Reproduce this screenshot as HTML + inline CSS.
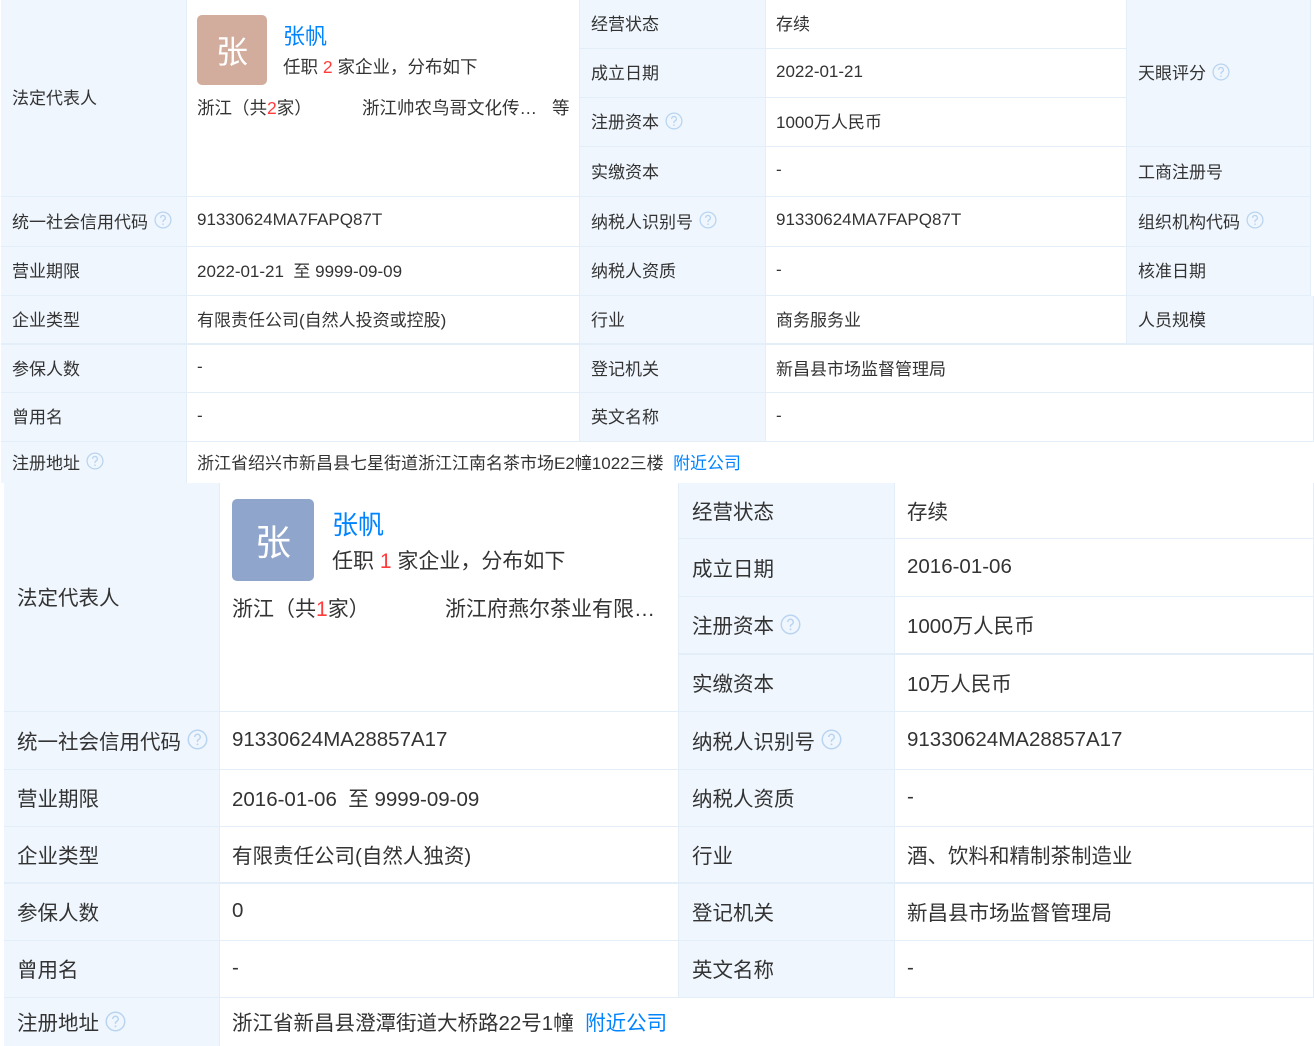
<!DOCTYPE html>
<html><head><meta charset="utf-8">
<style>
*{margin:0;padding:0;box-sizing:border-box}
body{width:1314px;height:1046px;background:#fff;position:relative;overflow:hidden;font-family:"Liberation Sans","Noto Sans CJK SC",sans-serif;color:#333}
.c{position:absolute;border-right:1px solid #e4eef8;border-bottom:1px solid #e4eef8;display:flex;align-items:center;white-space:nowrap}
.l{background:#eff6fd}
.t .c{font-size:17px;padding-bottom:3px}
.t .l{padding-left:11px}
.t .v{padding-left:10px}
.b .c{font-size:20.5px;padding-bottom:2px}
.b .l{padding-left:13px}
.b .v{padding-left:12px}
.q{display:inline-block;vertical-align:middle;margin-left:6px}
.blue{color:#0084ff}
.red{color:#ff3b3b}
.abs{position:absolute;white-space:nowrap}
</style></head><body>
<svg width="0" height="0" style="position:absolute"><defs><symbol id="q" viewBox="0 0 20 20"><circle cx="10" cy="10" r="8.8" fill="none" stroke="#b9d4f0" stroke-width="1.4"/><path d="M7.4 7.6a2.6 2.6 0 1 1 3.6 2.4c-.7.3-1 .8-1 1.5v.8" fill="none" stroke="#b9d4f0" stroke-width="1.4"/><circle cx="10" cy="14.6" r=".9" fill="#b9d4f0"/></symbol></defs></svg>

<div class="t">
<div class="c l" style="left:1px;top:0;width:186px;height:197px">法定代表人</div>
<div class="c v" style="left:187px;top:0;width:393px;height:197px"></div>
<div class="abs" style="left:197px;top:15px;width:70px;height:70px;background:#d2ac9c;border-radius:5px;color:#fff;font-size:32px;display:flex;align-items:center;justify-content:center">张</div>
<div class="abs blue" style="left:283px;top:19px;font-size:22px">张帆</div>
<div class="abs" style="left:283px;top:54px;font-size:17.5px">任职 <span class="red">2</span> 家企业，分布如下</div>
<div class="abs" style="left:197px;top:95px;font-size:17.5px">浙江（共<span class="red">2</span>家）</div>
<div class="abs" style="left:362px;top:95px;font-size:17.5px">浙江帅农鸟哥文化传…</div>
<div class="abs" style="left:552px;top:95px;font-size:17.5px">等</div>

<div class="c l" style="left:580px;top:0;width:186px;height:49px">经营状态</div>
<div class="c v" style="left:766px;top:0;width:361px;height:49px">存续</div>
<div class="c l" style="left:580px;top:49px;width:186px;height:49px">成立日期</div>
<div class="c v" style="left:766px;top:49px;width:361px;height:49px">2022-01-21</div>
<div class="c l" style="left:580px;top:98px;width:186px;height:49px">注册资本<svg class="q" width="18" height="18"><use href="#q"/></svg></div>
<div class="c v" style="left:766px;top:98px;width:361px;height:49px">1000万人民币</div>
<div class="c l" style="left:580px;top:147px;width:186px;height:50px">实缴资本</div>
<div class="c v" style="left:766px;top:147px;width:361px;height:50px">-</div>
<div class="c l" style="left:1127px;top:0;width:184px;height:147px">天眼评分<svg class="q" width="18" height="18"><use href="#q"/></svg></div>
<div class="c l" style="left:1127px;top:147px;width:184px;height:50px">工商注册号</div>

<div class="c l" style="left:1px;top:197px;width:186px;height:50px">统一社会信用代码<svg class="q" width="18" height="18"><use href="#q"/></svg></div>
<div class="c v" style="left:187px;top:197px;width:393px;height:50px">91330624MA7FAPQ87T</div>
<div class="c l" style="left:580px;top:197px;width:186px;height:50px">纳税人识别号<svg class="q" width="18" height="18"><use href="#q"/></svg></div>
<div class="c v" style="left:766px;top:197px;width:361px;height:50px">91330624MA7FAPQ87T</div>
<div class="c l" style="left:1127px;top:197px;width:184px;height:50px">组织机构代码<svg class="q" width="18" height="18"><use href="#q"/></svg></div>

<div class="c l" style="left:1px;top:247px;width:186px;height:49px">营业期限</div>
<div class="c v" style="left:187px;top:247px;width:393px;height:49px">2022-01-21&nbsp;&nbsp;至 9999-09-09</div>
<div class="c l" style="left:580px;top:247px;width:186px;height:49px">纳税人资质</div>
<div class="c v" style="left:766px;top:247px;width:361px;height:49px">-</div>
<div class="c l" style="left:1127px;top:247px;width:184px;height:49px">核准日期</div>

<div class="c l" style="left:1px;top:296px;width:186px;height:49px;border-bottom:2px solid #e4eef8">企业类型</div>
<div class="c v" style="left:187px;top:296px;width:393px;height:49px;border-bottom:2px solid #e4eef8">有限责任公司(自然人投资或控股)</div>
<div class="c l" style="left:580px;top:296px;width:186px;height:49px;border-bottom:2px solid #e4eef8">行业</div>
<div class="c v" style="left:766px;top:296px;width:361px;height:49px;border-bottom:2px solid #e4eef8">商务服务业</div>
<div class="c l" style="left:1127px;top:296px;width:187px;height:49px;border-bottom:2px solid #e4eef8">人员规模</div>

<div class="c l" style="left:1px;top:345px;width:186px;height:48px">参保人数</div>
<div class="c v" style="left:187px;top:345px;width:393px;height:48px">-</div>
<div class="c l" style="left:580px;top:345px;width:186px;height:48px">登记机关</div>
<div class="c v" style="left:766px;top:345px;width:548px;height:48px">新昌县市场监督管理局</div>

<div class="c l" style="left:1px;top:393px;width:186px;height:49px">曾用名</div>
<div class="c v" style="left:187px;top:393px;width:393px;height:49px">-</div>
<div class="c l" style="left:580px;top:393px;width:186px;height:49px">英文名称</div>
<div class="c v" style="left:766px;top:393px;width:548px;height:49px">-</div>

<div class="c l" style="left:1px;top:442px;width:186px;height:41px;border-bottom:none">注册地址<svg class="q" width="18" height="18"><use href="#q"/></svg></div>
<div class="c v" style="left:187px;top:442px;width:1127px;height:41px;border:none">浙江省绍兴市新昌县七星街道浙江江南名茶市场E2幢1022三楼&nbsp;&nbsp;<span class="blue">附近公司</span></div>
</div>

<div class="b">
<div class="c l" style="left:4px;top:483px;width:216px;height:229px">法定代表人</div>
<div class="c v" style="left:220px;top:483px;width:459px;height:229px"></div>
<div class="abs" style="left:232px;top:499px;width:82px;height:82px;background:#8fa5cc;border-radius:5px;color:#fff;font-size:36px;display:flex;align-items:center;justify-content:center">张</div>
<div class="abs blue" style="left:332px;top:505px;font-size:26px">张帆</div>
<div class="abs" style="left:332px;top:545px;font-size:21px">任职 <span class="red">1</span> 家企业，分布如下</div>
<div class="abs" style="left:232px;top:593px;font-size:21px">浙江（共<span class="red">1</span>家）</div>
<div class="abs" style="left:445px;top:593px;font-size:21px">浙江府燕尔茶业有限…</div>

<div class="c l" style="left:679px;top:483px;width:216px;height:56px">经营状态</div>
<div class="c v" style="left:895px;top:483px;width:419px;height:56px">存续</div>
<div class="c l" style="left:679px;top:539px;width:216px;height:58px">成立日期</div>
<div class="c v" style="left:895px;top:539px;width:419px;height:58px">2016-01-06</div>
<div class="c l" style="left:679px;top:597px;width:216px;height:58px;border-bottom:2px solid #e4eef8">注册资本<svg class="q" width="21" height="21"><use href="#q"/></svg></div>
<div class="c v" style="left:895px;top:597px;width:419px;height:58px;border-bottom:2px solid #e4eef8">1000万人民币</div>
<div class="c l" style="left:679px;top:655px;width:216px;height:57px">实缴资本</div>
<div class="c v" style="left:895px;top:655px;width:419px;height:57px">10万人民币</div>

<div class="c l" style="left:4px;top:712px;width:216px;height:58px">统一社会信用代码<svg class="q" width="21" height="21"><use href="#q"/></svg></div>
<div class="c v" style="left:220px;top:712px;width:459px;height:58px">91330624MA28857A17</div>
<div class="c l" style="left:679px;top:712px;width:216px;height:58px">纳税人识别号<svg class="q" width="21" height="21"><use href="#q"/></svg></div>
<div class="c v" style="left:895px;top:712px;width:419px;height:58px">91330624MA28857A17</div>

<div class="c l" style="left:4px;top:770px;width:216px;height:57px">营业期限</div>
<div class="c v" style="left:220px;top:770px;width:459px;height:57px">2016-01-06&nbsp;&nbsp;至 9999-09-09</div>
<div class="c l" style="left:679px;top:770px;width:216px;height:57px">纳税人资质</div>
<div class="c v" style="left:895px;top:770px;width:419px;height:57px">-</div>

<div class="c l" style="left:4px;top:827px;width:216px;height:57px;border-bottom:2px solid #e4eef8">企业类型</div>
<div class="c v" style="left:220px;top:827px;width:459px;height:57px;border-bottom:2px solid #e4eef8">有限责任公司(自然人独资)</div>
<div class="c l" style="left:679px;top:827px;width:216px;height:57px;border-bottom:2px solid #e4eef8">行业</div>
<div class="c v" style="left:895px;top:827px;width:419px;height:57px;border-bottom:2px solid #e4eef8">酒、饮料和精制茶制造业</div>

<div class="c l" style="left:4px;top:884px;width:216px;height:57px">参保人数</div>
<div class="c v" style="left:220px;top:884px;width:459px;height:57px">0</div>
<div class="c l" style="left:679px;top:884px;width:216px;height:57px">登记机关</div>
<div class="c v" style="left:895px;top:884px;width:419px;height:57px">新昌县市场监督管理局</div>

<div class="c l" style="left:4px;top:941px;width:216px;height:57px">曾用名</div>
<div class="c v" style="left:220px;top:941px;width:459px;height:57px">-</div>
<div class="c l" style="left:679px;top:941px;width:216px;height:57px">英文名称</div>
<div class="c v" style="left:895px;top:941px;width:419px;height:57px">-</div>

<div class="c l" style="left:4px;top:998px;width:216px;height:48px;border-bottom:none">注册地址<svg class="q" width="21" height="21"><use href="#q"/></svg></div>
<div class="c v" style="left:220px;top:998px;width:1094px;height:48px;border:none">浙江省新昌县澄潭街道大桥路22号1幢&nbsp;&nbsp;<span class="blue">附近公司</span></div>
</div>
</body></html>
